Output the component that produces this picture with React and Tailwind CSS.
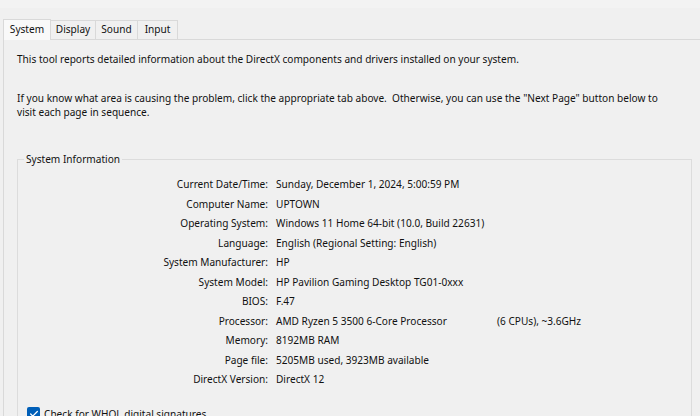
import { Check } from 'lucide-react'

const tabs = [
  ['System', 'w-[48px]'],
  ['Display', 'w-[45px]'],
  ['Sound', 'w-[42px]'],
  ['Input', 'w-[40px]'],
]

const rows = [
  ['Current Date/Time:', 'Sunday, December 1, 2024, 5:00:59 PM'],
  ['Computer Name:', 'UPTOWN'],
  ['Operating System:', 'Windows 11 Home 64-bit (10.0, Build 22631)'],
  ['Language:', 'English (Regional Setting: English)'],
  ['System Manufacturer:', 'HP'],
  ['System Model:', 'HP Pavilion Gaming Desktop TG01-0xxx'],
  ['BIOS:', 'F.47'],
  ['Processor:', 'AMD Ryzen 5 3500 6-Core Processor', '(6 CPUs), ~3.6GHz'],
  ['Memory:', '8192MB RAM'],
  ['Page file:', '5205MB used, 3923MB available'],
  ['DirectX Version:', 'DirectX 12'],
]

export default function App() {
  return (
    <div className="h-[416px] w-[700px] overflow-hidden bg-[#f0f0f0] text-[10.1px] text-[#111]" style={{ fontFamily: '"Noto Sans", "Open Sans", sans-serif' }}>
      <div className="h-[8px] bg-[#f3f3f3]" />
      <div className="flex h-[31px] items-end pl-[3px]">
        {tabs.map(([tab, w], i) => (
          <div
            key={tab}
            className={
              i === 0
                ? `relative z-10 -mb-px flex h-[21px] items-center justify-center border border-b-0 border-[#d9d9d9] bg-[#f9f9f9] pb-[1px] ${w}`
                : `flex h-[19px] items-center justify-center border border-b-0 border-l-0 border-[#d9d9d9] bg-[#f0f0f0] ${w}`
            }
          >
            {tab}
          </div>
        ))}
      </div>
      <div className="ml-[3px] h-[400px] border border-r-0 border-[#d9d9d9] bg-[#f0f0f0] pl-[13px] pr-[8px] pt-[12px]">
        <p className="leading-[14px]">
          This tool reports detailed information about the DirectX components and drivers installed on your system.
        </p>
        <p className="mt-[25px] w-[650px] leading-[14px]">
          If you know what area is causing the problem, click the appropriate tab above.&nbsp; Otherwise, you can use the "Next Page" button below to visit each page in sequence.
        </p>
        <fieldset className="mt-[33px] h-[300px] border border-[#dcdcdc] px-0">
          <legend className="ml-[6px] px-[2px] leading-[14px]">System Information</legend>
          <div className="flex flex-col pt-[9px]">
            {rows.map(([label, value, extra]) => (
              <div key={label} className="flex h-[19.5px] items-center">
                <span className="w-[258px] shrink-0 pr-[8px] text-right">{label}</span>
                <span className="w-[221px] shrink-0 whitespace-nowrap">{value}</span>
                {extra && <span className="whitespace-nowrap">{extra}</span>}
              </div>
            ))}
          </div>
          <label className="mt-[17px] ml-[9px] flex h-[14px] items-center gap-[4px] leading-[14px]">
            <span className="grid h-[13px] w-[13px] shrink-0 place-items-center rounded-[2px] bg-[#005fb8] text-white">
              <Check size={10} strokeWidth={3} />
            </span>
            Check for WHQL digital signatures
          </label>
        </fieldset>
      </div>
    </div>
  )
}
